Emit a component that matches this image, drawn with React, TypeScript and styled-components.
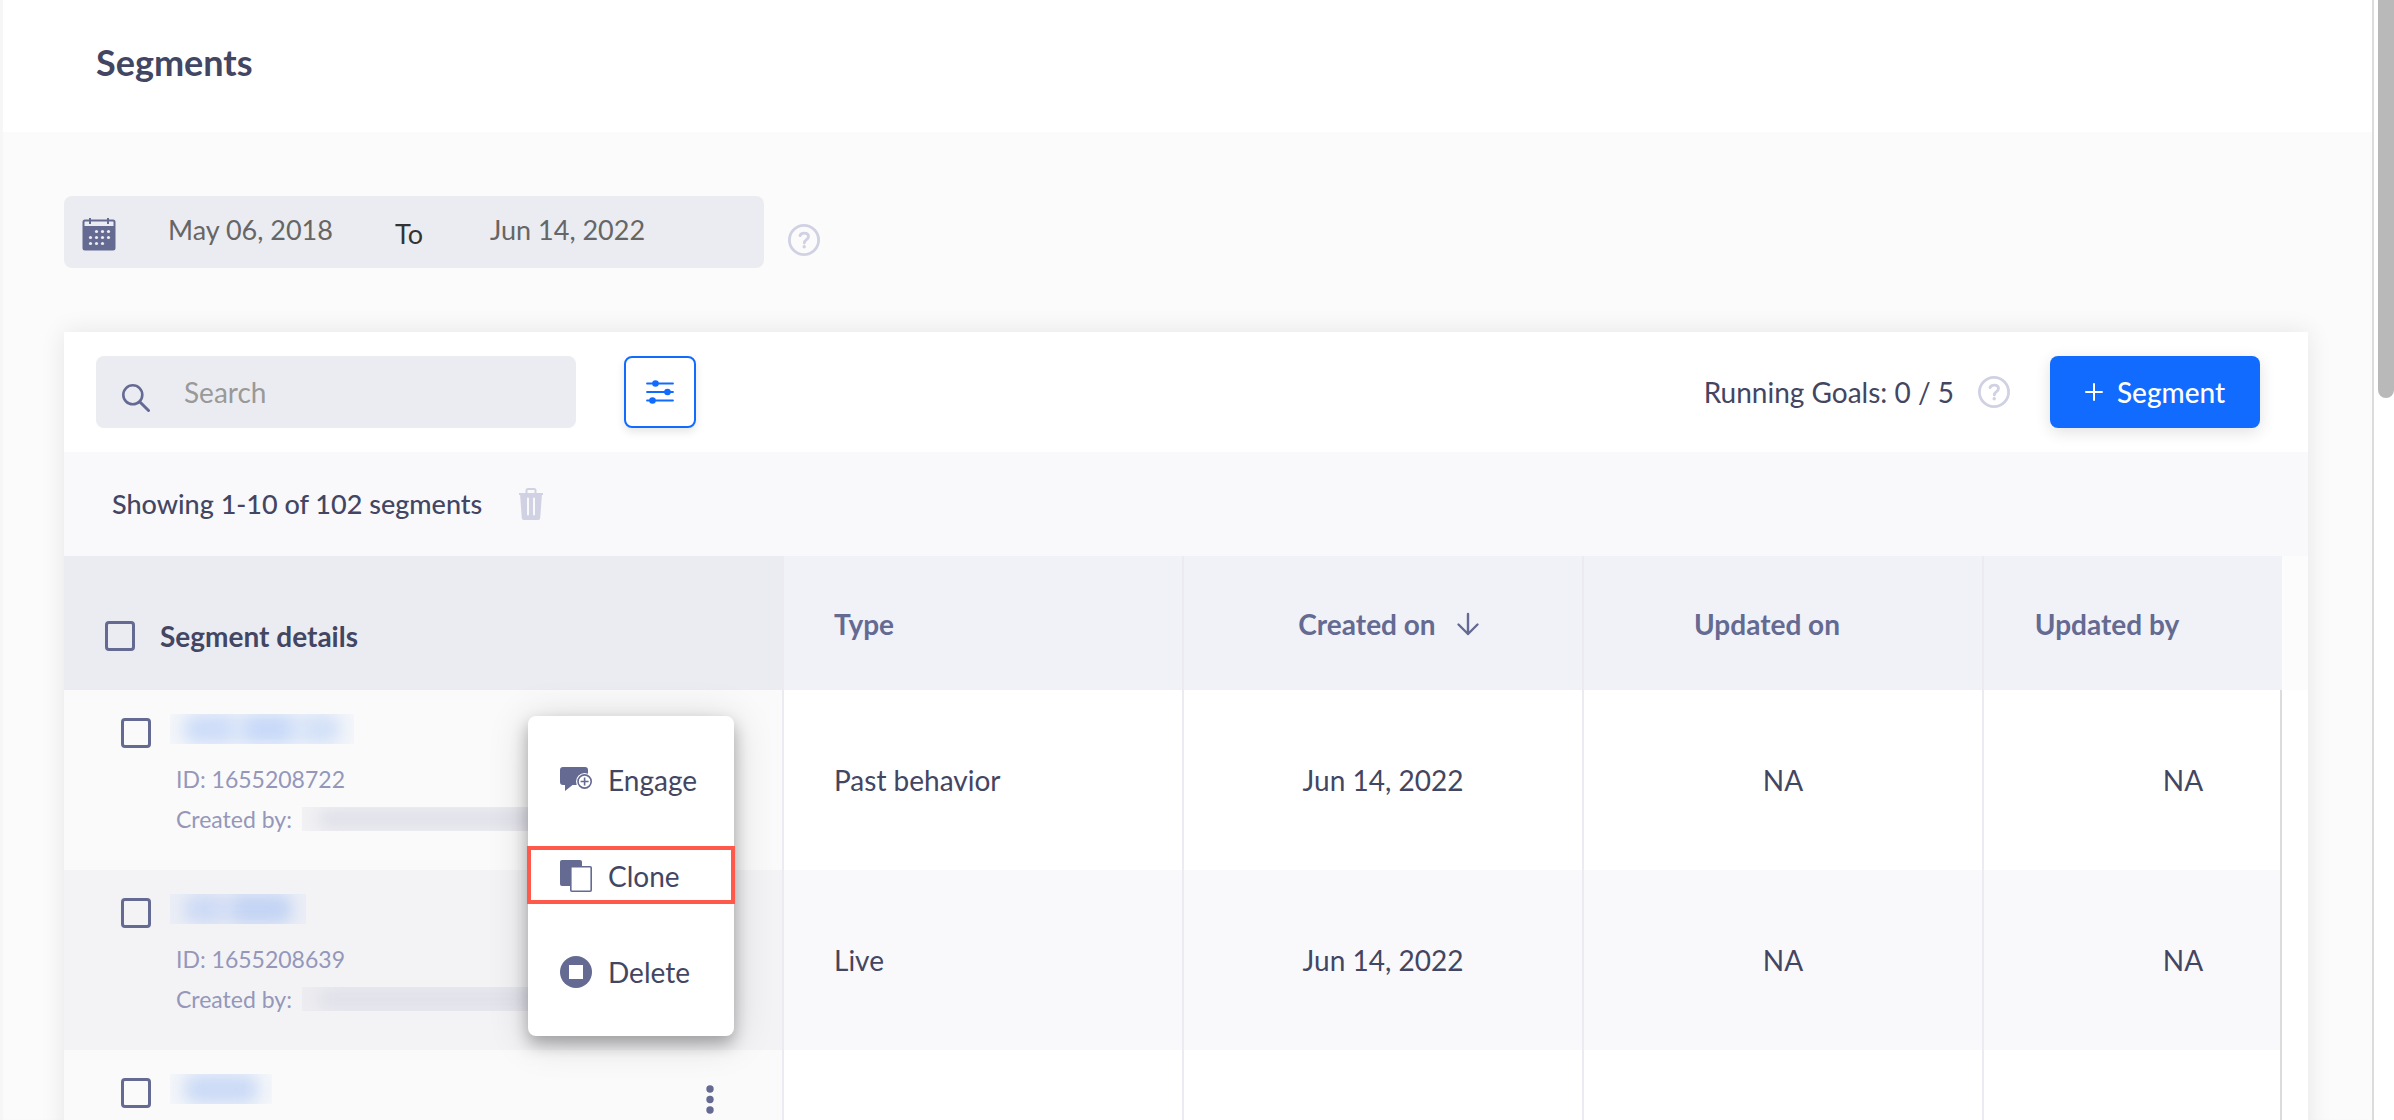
import React from "react";
import styled, { createGlobalStyle, css } from "styled-components";

const color = {
  ink: "#434662",
  indigo: "#646a92",
  muted: "#9497ba",
  faint: "#d0d2e3",
  field: "#ebecf2",
  line: "#ebebf1",
  blue: "#126bff",
  red: "#ff594c",
};

const GlobalStyle = createGlobalStyle`
  *, *::before, *::after { box-sizing: border-box; }
  body {
    margin: 0;
    background: #fff;
    color: ${color.ink};
    font-family: Lato, "Liberation Sans", sans-serif;
    font-size: 28px;
    line-height: 36px;
  }
  button, input { font: inherit; color: inherit; }
  svg { display: block; flex: none; }
`;

const Shell = styled.div`
  display: flex;
  height: 100vh;
  overflow: hidden;
`;

const Pane = styled.main`
  flex: 1;
  min-width: 0;
  overflow: hidden;
  background: #fbfbfb;
  border-right: 2px solid #dcdcdc;
  box-shadow: inset 3px 0 2px #f6f6f6;
`;

const ScrollGutter = styled.div`
  width: 20px;
  padding-left: 4px;
`;

const ScrollThumb = styled.div`
  height: 398px;
  background: #b9b9b9;
  border-radius: 0 0 8px 8px;
`;

const PageHeader = styled.header`
  display: flex;
  align-items: center;
  height: 132px;
  margin-left: 3px;
  padding: 0 93px 8px;
  background: #fff;
`;

const Title = styled.h1`
  margin: 0;
  font-size: 36px;
  font-weight: 700;
  line-height: 44px;
`;

const Content = styled.div`
  padding: 64px 64px 0;
`;

const DateBar = styled.div`
  display: flex;
  align-items: center;
  gap: 24px;
  margin-bottom: 64px;
`;

const DateRange = styled.div`
  display: flex;
  align-items: center;
  width: 700px;
  height: 72px;
  padding: 4px 18px 0;
  background: ${color.field};
  border-radius: 8px;
  color: #333;
  font-size: 27px;
`;

const CalendarMark = styled.span`
  color: ${color.indigo};
`;

const DateInput = styled.input`
  width: 178px;
  height: 56px;
  margin: 0 0 10px;
  padding: 0;
  border: 0;
  outline: 0;
  background: none;
  color: #666;
`;

const DateFrom = styled(DateInput)`
  margin-left: 52px;
`;

const DateTo = styled(DateInput)`
  margin-left: 67px;
`;

const RangeWord = styled.span`
  width: 28px;
  margin-left: 49px;
`;

const HelpButton = styled.button<{ $low?: boolean }>`
  display: flex;
  padding: ${(p) => (p.$low ? "16px 0 0" : "0")};
  border: 0;
  background: none;
  color: ${color.faint};
`;

const Card = styled.section`
  background: #fff;
  box-shadow: 0 0 24px rgba(0, 0, 0, 0.09);
`;

const Toolbar = styled.div`
  display: flex;
  align-items: center;
  padding: 24px 48px 24px 32px;
`;

const SearchBox = styled.label`
  display: flex;
  align-items: center;
  gap: 34px;
  width: 480px;
  height: 72px;
  padding: 0 26px;
  background: ${color.field};
  border-radius: 8px;
  color: ${color.indigo};

  svg { margin-top: 12px; }
`;

const SearchInput = styled.input`
  flex: 1;
  min-width: 0;
  padding: 0;
  border: 0;
  outline: 0;
  background: none;

  &::placeholder { color: #999; opacity: 1; }
`;

const FilterButton = styled.button`
  display: flex;
  align-items: center;
  justify-content: center;
  width: 72px;
  height: 72px;
  margin-left: 48px;
  padding: 0;
  border: 2px solid ${color.blue};
  border-radius: 8px;
  background: #fff;
  color: ${color.blue};
  box-shadow: 0 4px 8px rgba(0, 0, 0, 0.1);
`;

const ToolbarEnd = styled.div`
  display: flex;
  align-items: center;
  margin-left: auto;
`;

const Goals = styled.span`
  margin-right: 24px;
`;

const AddButton = styled.button`
  display: flex;
  align-items: center;
  justify-content: center;
  gap: 14px;
  width: 210px;
  height: 72px;
  margin-left: 40px;
  padding: 0;
  border: 0;
  border-radius: 8px;
  background: ${color.blue};
  color: #fff;
  font-weight: 500;
  box-shadow: 0 4px 16px rgba(0, 0, 0, 0.12);
`;

const Summary = styled.div`
  display: flex;
  align-items: center;
  gap: 36px;
  height: 104px;
  padding: 0 48px;
  background: #f9f9fc;
  font-size: 27px;
  font-weight: 500;
`;

const TrashButton = styled.button`
  display: flex;
  padding: 0;
  border: 0;
  background: none;
  color: ${color.faint};
`;

const TableFrame = styled.div`
  padding-right: 26px;
  background: linear-gradient(#fcfcfc 134px, #fff 134px);
`;

const Table = styled.table`
  width: 100%;
  table-layout: fixed;
  border-collapse: separate;
  border-spacing: 0;
`;

const Col = styled.col<{ $width?: number }>`
  ${(p) => p.$width && css`width: ${p.$width}px;`}
`;

const HeadCell = styled.th<{ $align?: string; $end?: number }>`
  height: 134px;
  padding: 2px ${(p) => p.$end ?? 0}px 0 ${(p) => (p.$align === "left" ? 50 : 0)}px;
  background: #f1f2f7;
  border-right: 2px solid ${color.line};
  color: ${color.indigo};
  font-weight: 700;
  text-align: ${(p) => p.$align ?? "center"};

  &:last-child { border-right: 0; }
`;

const HeadFirst = styled(HeadCell)`
  padding: 26px 0 0 41px;
  background: ${color.field};
  color: ${color.ink};
`;

const HeadLabel = styled.label`
  display: flex;
  align-items: center;
  gap: 25px;
`;

const SortButton = styled.button`
  display: flex;
  align-items: center;
  gap: 20px;
  margin: 0 auto;
  padding: 0 0 0 12px;
  border: 0;
  background: none;
`;

const Check = styled.input`
  appearance: none;
  flex: none;
  width: 30px;
  height: 30px;
  margin: 0;
  border: 3px solid ${color.indigo};
  border-radius: 4px;
`;

const Row = styled.tr`
  --first: #fafafa;
  --rest: #fff;

  &:nth-child(even) {
    --first: #f3f3f6;
    --rest: #f9f9fc;
  }
`;

const Cell = styled.td<{ $align?: string; $start?: number }>`
  height: 180px;
  padding: 0 0 0 ${(p) => p.$start ?? 0}px;
  background: var(--rest);
  border-right: 2px solid ${color.line};
  text-align: ${(p) => p.$align ?? "center"};

  &:last-child { border-right-color: #dcdcdc; }
`;

const FirstCell = styled(Cell)`
  position: relative;
  padding: 0;
  background: var(--first);
  vertical-align: top;
`;

const Details = styled.div`
  display: flex;
  align-items: flex-start;
  height: 180px;
  padding: 28px 68px 0 57px;
`;

const DetailText = styled.div`
  flex: 1;
  margin: -4px 0 0 25px;
  color: ${color.muted};
  font-size: 23px;
  line-height: 40px;
`;

const NameLink = styled.a`
  display: block;
  height: 45px;
  margin-left: -6px;
`;

const Blurred = styled.span<{ $width: number; $height: number; $tint: string; $wash: string }>`
  display: block;
  flex: none;
  width: ${(p) => p.$width}px;
  height: ${(p) => p.$height}px;
  overflow: hidden;
  background: ${(p) => p.$wash};

  &::before {
    content: "";
    display: block;
    height: 100%;
    margin: 0 14px;
    border-radius: 12px;
    background: ${(p) => p.$tint};
    filter: blur(8px);
  }
`;

const Creator = styled.div`
  display: flex;
  align-items: center;
  gap: 10px;
  white-space: nowrap;
`;

const MoreButton = styled.button`
  display: flex;
  padding: 7px 0 0;
  border: 0;
  background: none;
  color: ${color.indigo};
`;

const Menu = styled.ul`
  position: absolute;
  z-index: 1;
  top: 26px;
  right: 48px;
  width: 206px;
  margin: 0;
  padding: 16px 0;
  list-style: none;
  background: #fff;
  border-radius: 8px;
  box-shadow: 0 8px 16px rgba(0, 0, 0, 0.28), 0 4px 40px rgba(0, 0, 0, 0.16);
`;

const MenuItem = styled.li<{ $marked?: boolean }>`
  position: relative;

  ${(p) =>
    p.$marked &&
    css`
      &::after {
        content: "";
        position: absolute;
        inset: 18px -1px 20px;
        border: 4px solid ${color.red};
        pointer-events: none;
      }
    `}
`;

const MenuButton = styled.button`
  display: flex;
  align-items: center;
  gap: 16px;
  width: 100%;
  height: 96px;
  padding: 0 0 0 32px;
  border: 0;
  background: none;

  svg { color: ${color.indigo}; }
`;

const CalendarIcon = () => (
  <svg width="34" height="34" viewBox="0 0 34 34" fill="none" aria-hidden="true">
    <rect x="1.5" y="3.5" width="31" height="29" rx="1.5" stroke="currentColor" strokeWidth="2" />
    <path d="M1 9h32v22a2 2 0 0 1-2 2H3a2 2 0 0 1-2-2z" fill="currentColor" />
    <path d="M8 1v6M26 1v6" stroke="currentColor" strokeWidth="2" />
    <g fill={color.field}>
      {[
        [14.5, 14.5], [20.5, 14.5], [26.5, 14.5],
        [8.5, 20.5], [14.5, 20.5], [20.5, 20.5], [26.5, 20.5],
        [8.5, 26.5], [14.5, 26.5], [20.5, 26.5],
      ].map(([x, y]) => (
        <circle key={`${x}-${y}`} cx={x} cy={y} r="1.6" />
      ))}
    </g>
  </svg>
);

const HelpIcon = () => (
  <svg width="32" height="32" viewBox="0 0 32 32" fill="none" stroke="currentColor" aria-hidden="true">
    <circle cx="16" cy="16" r="14.6" strokeWidth="2.8" />
    <path d="M12 11.6c.6-1.4 2-2.4 4.2-2.4 2.5 0 4.3 1.3 4.3 3.4 0 3.2-4.2 2.9-4.2 6.4" strokeWidth="2.8" strokeLinecap="round" />
    <circle cx="16.2" cy="22.8" r="1.7" fill="currentColor" stroke="none" />
  </svg>
);

const SearchIcon = () => (
  <svg width="28" height="28" viewBox="0 0 28 28" fill="none" stroke="currentColor" strokeWidth="2.6" strokeLinecap="round" aria-hidden="true">
    <circle cx="10.8" cy="10.8" r="9.5" />
    <path d="M17.7 17.7L26.5 26.5" strokeWidth="3" />
  </svg>
);

const FilterIcon = () => (
  <svg width="28" height="26" viewBox="0 0 28 26" aria-hidden="true">
    <g stroke="currentColor" strokeWidth="1.8" strokeLinecap="round">
      <path d="M1 4.500h26M1 13h26M1 21.500h26" />
    </g>
    <g fill="currentColor">
      <circle cx="9.5" cy="4.5" r="3.3" />
      <circle cx="21.5" cy="13" r="3.3" />
      <circle cx="6.5" cy="21.5" r="3.3" />
    </g>
  </svg>
);

const PlusIcon = () => (
  <svg width="18" height="18" viewBox="0 0 18 18" stroke="currentColor" strokeWidth="2" strokeLinecap="round" aria-hidden="true">
    <path d="M9 1v16M1 9h16" />
  </svg>
);

const TrashIcon = () => (
  <svg width="26" height="32" viewBox="0 0 26 32" fill="none" aria-hidden="true">
    <path d="M8.500 6V2.500a1.500 1.500 0 0 1 1.500-1.500h6a1.500 1.500 0 0 1 1.500 1.500V6" stroke="currentColor" strokeWidth="2" />
    <path d="M1 6h24" stroke="currentColor" strokeWidth="2" />
    <path d="M2 6h22l-1.800 24a2 2 0 0 1-2 2H5.800a2 2 0 0 1-2-2z" fill="currentColor" />
    <path d="M10 10.500v16M16 10.500v16" stroke="#f9f9fc" strokeWidth="2" strokeLinecap="round" />
  </svg>
);

const ArrowDownIcon = () => (
  <svg width="24" height="24" viewBox="0 0 24 24" fill="none" stroke="currentColor" strokeWidth="2.4" strokeLinecap="round" strokeLinejoin="round" aria-hidden="true">
    <path d="M12 2v20M2.500 12.500L12 22l9.500-9.500" />
  </svg>
);

const MoreIcon = () => (
  <svg width="8" height="30" viewBox="0 0 8 30" fill="currentColor" aria-hidden="true">
    <circle cx="4" cy="4" r="3.7" />
    <circle cx="4" cy="14.5" r="3.7" />
    <circle cx="4" cy="25" r="3.7" />
  </svg>
);

const EngageIcon = () => (
  <svg width="32" height="32" viewBox="0 0 32 32" fill="currentColor" aria-hidden="true">
    <path d="M3 3h22a3 3 0 0 1 3 3v15H12.500L5 27v-6H3a3 3 0 0 1-3-3V6a3 3 0 0 1 3-3z" />
    <circle cx="24.6" cy="17.5" r="8.6" fill="#fff" />
    <circle cx="24.6" cy="17.5" r="6.6" fill="none" stroke="currentColor" strokeWidth="1.6" />
    <path d="M24.600 13.500v8M20.600 17.500h8" fill="none" stroke="currentColor" strokeWidth="1.6" />
  </svg>
);

const CloneIcon = () => (
  <svg width="32" height="32" viewBox="0 0 32 32" aria-hidden="true">
    <rect width="22" height="26" rx="2" fill="currentColor" />
    <rect x="10.8" y="6.8" width="20.4" height="24.4" rx="1" fill="#fff" stroke="currentColor" strokeWidth="1.6" />
  </svg>
);

const DeleteIcon = () => (
  <svg width="32" height="32" viewBox="0 0 32 32" aria-hidden="true">
    <circle cx="16" cy="16" r="16" fill="currentColor" />
    <rect x="9" y="9" width="14" height="14" fill="#fff" />
  </svg>
);

const blueTints = [
  "linear-gradient(90deg, #cddcf8 0 28%, #dfe8f8 34% 36%, #c6d8f8 42% 66%, #dfe8f8 72% 76%, #d2e0f7 80%)",
  "linear-gradient(90deg, #cddaf5 0 30%, #d9e2f5 38% 42%, #c2d3f4 50%)",
  "#cbdaf6",
];

const rows = [
  { id: "1655208722", nameWidth: 184, type: "Past behavior", created: "Jun 14, 2022", updated: "NA", by: "NA", menu: true },
  { id: "1655208639", nameWidth: 136, type: "Live", created: "Jun 14, 2022", updated: "NA", by: "NA", menu: false },
  { id: "", nameWidth: 102, type: "", created: "", updated: "", by: "", menu: false },
];

const menuItems = [
  { label: "Engage", Icon: EngageIcon },
  { label: "Clone", Icon: CloneIcon, marked: true },
  { label: "Delete", Icon: DeleteIcon },
];

const RowMenu = () => (
  <Menu>
    {menuItems.map(({ label, Icon, marked }) => (
      <MenuItem key={label} $marked={marked}>
        <MenuButton type="button">
          <Icon />
          {label}
        </MenuButton>
      </MenuItem>
    ))}
  </Menu>
);

export default function App() {
  return (
    <>
      <GlobalStyle />
      <Shell>
        <Pane>
          <PageHeader>
            <Title>Segments</Title>
          </PageHeader>
          <Content>
            <DateBar>
              <DateRange>
                <CalendarMark><CalendarIcon /></CalendarMark>
                <DateFrom aria-label="From date" defaultValue="May 06, 2018" />
                <RangeWord>To</RangeWord>
                <DateTo aria-label="To date" defaultValue="Jun 14, 2022" />
              </DateRange>
              <HelpButton type="button" aria-label="Help" $low><HelpIcon /></HelpButton>
            </DateBar>
            <Card>
              <Toolbar>
                <SearchBox>
                  <SearchIcon />
                  <SearchInput aria-label="Search" placeholder="Search" />
                </SearchBox>
                <FilterButton type="button" aria-label="Filters"><FilterIcon /></FilterButton>
                <ToolbarEnd>
                  <Goals>Running Goals: 0 / 5</Goals>
                  <HelpButton type="button" aria-label="Help"><HelpIcon /></HelpButton>
                  <AddButton type="button"><PlusIcon />Segment</AddButton>
                </ToolbarEnd>
              </Toolbar>
              <Summary>
                <span>Showing 1-10 of 102 segments</span>
                <TrashButton type="button" aria-label="Delete selected"><TrashIcon /></TrashButton>
              </Summary>
              <TableFrame>
                <Table>
                  <colgroup>
                    <Col $width={720} />
                    <Col $width={400} />
                    <Col $width={400} />
                    <Col $width={400} />
                    <Col />
                  </colgroup>
                  <thead>
                    <tr>
                      <HeadFirst $align="left">
                        <HeadLabel><Check type="checkbox" />Segment details</HeadLabel>
                      </HeadFirst>
                      <HeadCell $align="left">Type</HeadCell>
                      <HeadCell>
                        <SortButton type="button">Created on<ArrowDownIcon /></SortButton>
                      </HeadCell>
                      <HeadCell $end={32}>Updated on</HeadCell>
                      <HeadCell $end={52}>Updated by</HeadCell>
                    </tr>
                  </thead>
                  <tbody>
                    {rows.map((row, i) => (
                      <Row key={i}>
                        <FirstCell $align="left">
                          <Details>
                            <Check type="checkbox" aria-label="Select segment" />
                            <DetailText>
                              <NameLink href="#" aria-label="Segment name">
                                <Blurred $width={row.nameWidth} $height={30} $tint={blueTints[i]} $wash={i === 1 ? "#ebeef6" : "#f3f6fa"} />
                              </NameLink>
                              {row.id && (
                                <>
                                  <div>ID: {row.id}</div>
                                  <Creator>
                                    Created by:
                                    <Blurred $width={250} $height={24} $tint="#e1e1ea" $wash={i === 1 ? "#ededf1" : "#f2f2f5"} />
                                  </Creator>
                                </>
                              )}
                            </DetailText>
                            <MoreButton type="button" aria-label="More actions"><MoreIcon /></MoreButton>
                          </Details>
                          {row.menu && <RowMenu />}
                        </FirstCell>
                        <Cell $align="left" $start={50}>{row.type}</Cell>
                        <Cell>{row.created}</Cell>
                        <Cell>{row.updated}</Cell>
                        <Cell $start={102}>{row.by}</Cell>
                      </Row>
                    ))}
                  </tbody>
                </Table>
              </TableFrame>
            </Card>
          </Content>
        </Pane>
        <ScrollGutter>
          <ScrollThumb />
        </ScrollGutter>
      </Shell>
    </>
  );
}
